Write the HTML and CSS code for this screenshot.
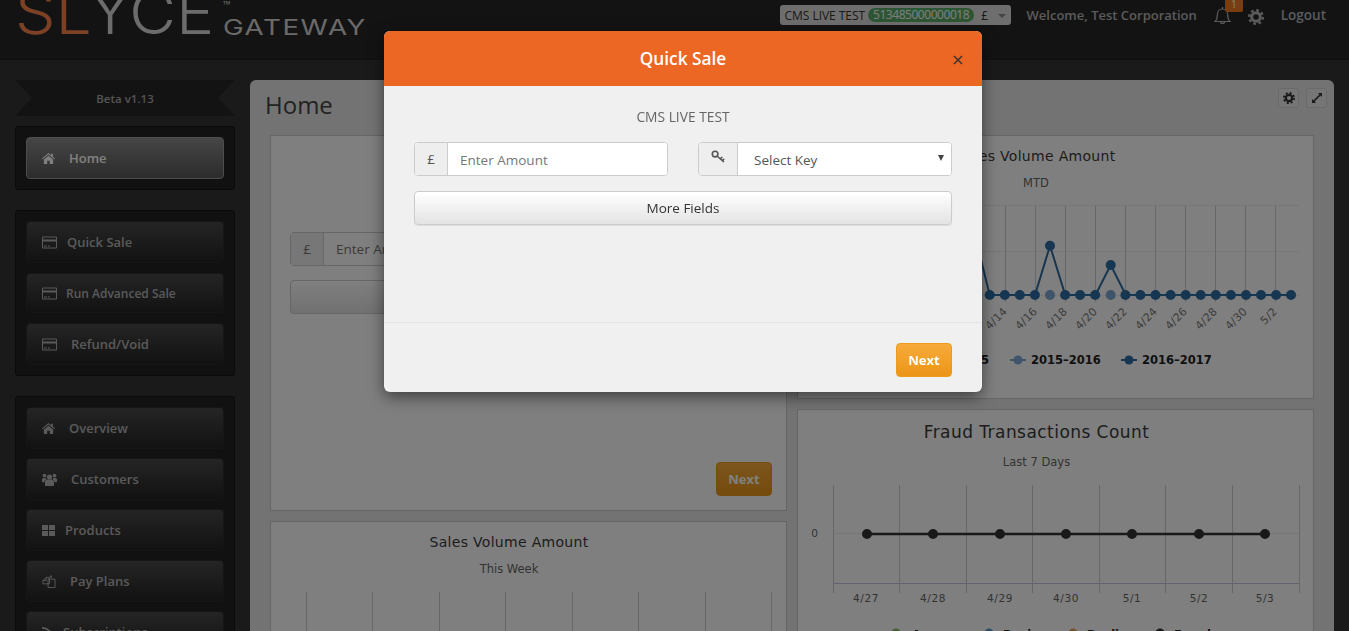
FILE: index.html
```html
<!DOCTYPE html>
<html lang="en">
<head>
<meta charset="utf-8">
<title>Slyce Gateway</title>
<link rel="stylesheet" href="styles.css">
</head>
<body>
<svg class="defs" width="0" height="0" aria-hidden="true">
  <symbol id="i-home" viewBox="0 0 14 12"><path d="M7 0 0 6l.7.9L7 1.6l6.3 5.3.7-.9-2.2-1.9V1h-2v1.6zM2 7.2V12h3.6V8.4h2.8V12H12V7.2L7 3z"/></symbol>
  <symbol id="i-card" viewBox="0 0 15 12"><path fill-rule="evenodd" d="M1 0h13a1 1 0 0 1 1 1v10a1 1 0 0 1-1 1H1a1 1 0 0 1-1-1V1a1 1 0 0 1 1-1zm0 1v2h13V1zm0 4v6h13V5zm1 4h3v1H2zm4 0h2v1H6z"/></symbol>
  <symbol id="i-users" viewBox="0 0 15 13"><circle cx="7.5" cy="4" r="2.6"/><circle cx="2.5" cy="2.6" r="1.9"/><circle cx="12.5" cy="2.6" r="1.9"/><path d="M3 13V9a2.5 2.5 0 0 1 2.5-2.500h4A2.500 2.500 0 0 1 12 9v4zM0 9V6.500A1.500 1.500 0 0 1 1.500 5h2.200a3 3 0 0 0 .8 1.500A3.300 3.300 0 0 0 2.200 9.500zM15 9V6.500A1.500 1.500 0 0 0 13.500 5h-2.200a3 3 0 0 1-.8 1.500 3.300 3.300 0 0 1 2.300 3z"/></symbol>
  <symbol id="i-grid" viewBox="0 0 13 11"><path d="M0 0h6v5H0zM7 0h6v5H7zM0 6h6v5H0zM7 6h6v5H7z"/></symbol>
  <symbol id="i-copy" viewBox="0 0 14 14"><path fill="none" stroke="currentColor" d="M.5 6 4 2.500h3.500v7h-7zM4 2.500V6H.5M7 4 9.500.5v3M6 4.500 8.500 4.500H13.500v9h-7.500z"/></symbol>
  <symbol id="i-rss" viewBox="0 0 12 12"><circle cx="2" cy="10" r="1.700"/><path fill="none" stroke="currentColor" stroke-width="1.800" d="M0 5a7 7 0 0 1 7 7M0 1a11 11 0 0 1 11 11"/></symbol>
  <symbol id="i-gear" viewBox="0 0 16 16"><circle cx="8" cy="8" r="4.300" fill="none" stroke="currentColor" stroke-width="3"/><circle cx="8" cy="8" r="6.800" fill="none" stroke="currentColor" stroke-width="2.400" stroke-dasharray="2.700 2.640"/></symbol>
</svg>

<header class="topbar">
  <div class="logo">
    <span class="logo-mark"><span class="logo-o">SL</span><span class="logo-g">YCE</span></span>
    <span class="logo-tm">™</span>
    <span class="logo-word">GATEWAY</span>
  </div>
  <div class="top-right">
    <div class="merchant">
      <span class="merchant-name">CMS LIVE TEST</span>
      <span class="merchant-id">513485000000018</span>
      <span class="merchant-cur">£</span>
      <span class="caret"></span>
    </div>
    <span class="welcome">Welcome, Test Corporation</span>
    <span class="bell">
      <svg class="bell-ico" viewBox="0 0 17 19" width="17" height="19"><path fill="none" stroke="currentColor" stroke-width="1.200" d="M1 15.500c1.800-1.500 2.300-3.500 2.300-6.500 0-3.500 2.200-6 5.200-6s5.200 2.500 5.200 6c0 3 .5 5 2.300 6.500zM8.500 1v2M6.500 15.500a2 2 0 0 0 4 0"/></svg>
      <span class="bell-badge">1</span>
    </span>
    <svg class="top-gear" width="16" height="16"><use href="#i-gear"/></svg>
    <span class="logout">Logout</span>
  </div>
</header>

<div class="layout">
  <aside class="sidebar">
    <div class="ribbon">Beta v1.13</div>
    <nav class="nav-group">
      <a class="nav-btn active"><svg class="ni ni-13"><use href="#i-home"/></svg><span class="gap-14">Home</span></a>
    </nav>
    <nav class="nav-group nav-spaced">
      <a class="nav-btn"><svg class="ni ni-15"><use href="#i-card"/></svg><span class="gap-10">Quick Sale</span></a>
      <a class="nav-btn short small"><svg class="ni ni-15"><use href="#i-card"/></svg><span class="gap-9">Run Advanced Sale</span></a>
      <a class="nav-btn"><svg class="ni ni-15"><use href="#i-card"/></svg><span class="gap-14">Refund/Void</span></a>
    </nav>
    <nav class="nav-group nav-tight">
      <a class="nav-btn"><svg class="ni ni-13"><use href="#i-home"/></svg><span class="gap-14">Overview</span></a>
      <a class="nav-btn"><svg class="ni ni-15"><use href="#i-users"/></svg><span class="gap-14">Customers</span></a>
      <a class="nav-btn"><svg class="ni ni-13"><use href="#i-grid"/></svg><span class="gap-10">Products</span></a>
      <a class="nav-btn"><svg class="ni ni-14"><use href="#i-copy"/></svg><span class="gap-14">Pay Plans</span></a>
      <a class="nav-btn"><svg class="ni ni-11"><use href="#i-rss"/></svg><span class="gap-10">Subscriptions</span></a>
    </nav>
  </aside>

  <main class="panel">
    <div class="panel-head">
      <h1>Home</h1>
      <div class="tools">
        <button class="tool"><svg width="12" height="12"><use href="#i-gear"/></svg></button>
        <button class="tool"><svg width="12" height="12" viewBox="0 0 12 12"><path d="M7 1h4v4L9.600 3.600 3.600 9.600 5 11H1V7l1.400 1.400 6-6z"/></svg></button>
      </div>
    </div>
    <div class="columns">
      <div class="col">
        <section class="card card-form">
          <div class="bg-form">
            <div class="bg-inputs">
              <div class="bg-group"><span class="bg-addon">£</span><span class="bg-field">Enter Amount</span></div>
              <div class="bg-group"><span class="bg-addon">£</span><span class="bg-field">Select Key</span></div>
            </div>
            <div class="bg-more">More Fields</div>
          </div>
          <div class="bg-foot"><span class="btn-next">Next</span></div>
        </section>
        <section class="card card-week">
          <svg class="chart" viewBox="270 521 517 110" width="517" height="110">
            <text class="c-title" x="509" y="547" text-anchor="middle">Sales Volume Amount</text>
            <text class="c-sub" x="509" y="573" text-anchor="middle">This Week</text>
            <path class="c-grid" d="M306.500 592V631M372.500 592V631M439.500 592V631M505.500 592V631M572.500 592V631M638.500 592V631M705.500 592V631M771.500 592V631"/>
          </svg>
        </section>
      </div>
      <div class="col">
        <section class="card card-mtd">
          <svg class="chart" viewBox="797 135 517 264" width="517" height="264">
            <text class="c-title" x="1036" y="161" text-anchor="middle">Sales Volume Amount</text>
            <text class="c-sub" x="1036" y="187" text-anchor="middle">MTD</text>
            <path class="c-hline" d="M960 205.500H1299M960 251.500H1299M960 295.500H1299"/>
            <path class="c-grid" d="M1005.500 206V302M1035.500 206V302M1065.500 206V302M1095.500 206V302M1125.500 206V302M1155.500 206V302M1185.500 206V302M1215.500 206V302M1245.500 206V302M1275.500 206V302"/>
            <path class="c-light" d="M1050 295h.01M1110.700 295h.01"/>
            <path class="c-line" d="M974.600 234 989.700 295H1035L1050 245.700 1065.200 295H1095.500L1110.700 265 1125.800 295H1291"/>
            <path class="c-dots" d="M989.700 295h.01M1004.800 295h.01M1019.800 295h.01M1034.900 295h.01M1050 245.700h.01M1065.100 295h.01M1080.100 295h.01M1095.200 295h.01M1110.700 265h.01M1125.400 295h.01M1140.400 295h.01M1155.500 295h.01M1170.600 295h.01M1185.700 295h.01M1200.700 295h.01M1215.800 295h.01M1230.900 295h.01M1246 295h.01M1261 295h.01M1276.100 295h.01M1291 295h.01"/>
            <g class="c-tick">
              <text transform="translate(1008 312) rotate(-45)" text-anchor="end">4/14</text>
              <text transform="translate(1038 312) rotate(-45)" text-anchor="end">4/16</text>
              <text transform="translate(1068 312) rotate(-45)" text-anchor="end">4/18</text>
              <text transform="translate(1098 312) rotate(-45)" text-anchor="end">4/20</text>
              <text transform="translate(1128 312) rotate(-45)" text-anchor="end">4/22</text>
              <text transform="translate(1158 312) rotate(-45)" text-anchor="end">4/24</text>
              <text transform="translate(1188 312) rotate(-45)" text-anchor="end">4/26</text>
              <text transform="translate(1218 312) rotate(-45)" text-anchor="end">4/28</text>
              <text transform="translate(1248 312) rotate(-45)" text-anchor="end">4/30</text>
              <text transform="translate(1278 312) rotate(-45)" text-anchor="end">5/2</text>
            </g>
            <g class="c-legend">
              <text x="989" y="364" text-anchor="end">2014–2015</text>
              <path class="lg-light-line" d="M1010 360H1026"/><circle class="lg-light" cx="1018" cy="360" r="4.500"/>
              <text x="1031" y="364">2015–2016</text>
              <path class="lg-dark-line" d="M1121 360H1137"/><circle class="lg-dark" cx="1129" cy="360" r="4.500"/>
              <text x="1142" y="364">2016–2017</text>
            </g>
          </svg>
        </section>
        <section class="card card-fraud">
          <svg class="chart" viewBox="797 409 517 222" width="517" height="222">
            <text class="c-title c-title-lg" x="1036.500" y="438" text-anchor="middle">Fraud Transactions Count</text>
            <text class="c-sub" x="1036.500" y="466" text-anchor="middle">Last 7 Days</text>
            <path class="c-hline" d="M834 533.500H1300"/>
            <path class="c-grid" d="M833.500 485V593M899.500 485V593M966.500 485V593M1032.500 485V593M1099.500 485V593M1165.500 485V593M1232.500 485V593M1299.500 485V593"/>
            <path class="c-axis" d="M833 583.500H1300"/>
            <path class="f-line" d="M867 534H1265"/>
            <path class="f-dots" d="M867 534h.01M933 534h.01M1000 534h.01M1066 534h.01M1132 534h.01M1199 534h.01M1265 534h.01"/>
            <g class="c-label">
              <text x="815" y="537" text-anchor="middle">0</text>
              <text x="866" y="602" text-anchor="middle">4/27</text>
              <text x="933" y="602" text-anchor="middle">4/28</text>
              <text x="1000" y="602" text-anchor="middle">4/29</text>
              <text x="1066" y="602" text-anchor="middle">4/30</text>
              <text x="1132" y="602" text-anchor="middle">5/1</text>
              <text x="1199" y="602" text-anchor="middle">5/2</text>
              <text x="1265" y="602" text-anchor="middle">5/3</text>
            </g>
            <g class="c-legend">
              <circle class="lg-green" cx="896" cy="633" r="4.500"/><text x="912" y="639">Approve</text>
              <circle class="lg-blue" cx="989" cy="633" r="4.500"/><text x="1003" y="639">Review</text>
              <circle class="lg-orange" cx="1073" cy="633" r="4.500"/><text x="1087" y="639">Decline</text>
              <circle class="lg-black" cx="1160" cy="633" r="4.500"/><text x="1174" y="639">Fraud</text>
            </g>
          </svg>
        </section>
      </div>
    </div>
  </main>
</div>

<div class="backdrop"></div>
<div class="modal" role="dialog" aria-label="Quick Sale">
  <div class="modal-head">
    <span class="modal-title">Quick Sale</span>
    <button class="modal-close" aria-label="Close"><svg width="10" height="10" viewBox="0 0 10 10"><path d="M1 1l8 8M9 1l-8 8"/></svg></button>
  </div>
  <div class="modal-body">
    <div class="modal-merchant">CMS LIVE TEST</div>
    <div class="modal-row">
      <div class="group">
        <span class="addon addon-cur">£</span>
        <input class="field" type="text" placeholder="Enter Amount">
      </div>
      <div class="group">
        <span class="addon addon-key"><svg width="14" height="14" viewBox="0 0 13 13"><circle cx="3.800" cy="3.800" r="2.600"/><path d="M5.800 5.800 12 11M8.500 8.200 10.500 6.500M10.500 10 12.200 8.300"/></svg></span>
        <span class="select-wrap"><select class="field field-select"><option>Select Key</option></select></span>
      </div>
    </div>
    <button class="btn-more">More Fields</button>
  </div>
  <div class="modal-foot"><button class="btn-next btn-next-live">Next</button></div>
</div>
</body>
</html>
```

FILE: styles.css
```css
* { box-sizing: border-box; }
html, body { margin: 0; height: 631px; overflow: hidden; }
body { background: #343434; font-family: "Open Sans", "Liberation Sans", sans-serif; font-size: 13px; color: #333; }
.defs { position: absolute; }

/* top bar */
.topbar { height: 60px; background: #262626; border-bottom: 1px solid #202020; display: flex; justify-content: space-between; overflow: hidden; }
.logo { height: 34px; margin-left: 15px; position: relative; width: 360px; }
.logo-mark { position: absolute; left: 0; bottom: 0; font-family: "Inter", sans-serif; font-weight: 300; font-size: 60px; line-height: 44px; display: block; transform: scaleX(1.07); transform-origin: left bottom; white-space: nowrap; }
.logo-o { color: #f8824a; }
.logo-g { color: #d8d8d8; }
.logo-tm { position: absolute; left: 208px; top: -3px; font-size: 10px; letter-spacing: 1px; color: #ccc; }
.logo-word { position: absolute; left: 208px; bottom: -2px; font-family: "Inter", sans-serif; font-size: 21.500px; line-height: 18px; letter-spacing: 1.200px; color: #d4d4d4; transform: scaleX(1.29); transform-origin: left center; }
.top-right { display: flex; align-items: flex-start; padding-right: 23px; color: #b6b6b6; }
.merchant { margin-top: 5px; width: 231px; height: 20px; background: #dcdcdc; border-radius: 3px; display: flex; align-items: center; padding-left: 5px; color: #333; font-size: 12px; position: relative; }
.merchant-name { letter-spacing: -.05px; }
.merchant-id { margin-left: 3px; height: 14px; line-height: 14px; padding: 0 5px; background: #5cab66; color: #fff; border-radius: 8px; letter-spacing: -.45px; }
.merchant-cur { margin-left: 7px; }
.caret { position: absolute; left: 218px; top: 9px; border: 4px solid transparent; border-top-color: #888; border-bottom: 0; }
.welcome { margin-left: 16px; line-height: 30px; font-weight: 600; }
.bell { position: relative; margin-left: 17px; width: 17px; height: 24px; padding-top: 6px; display: block; }
.bell-ico { display: block; color: #b6b6b6; }
.bell-badge { position: absolute; left: 11px; top: -2px; width: 18px; height: 14px; background: #f47a20; border-radius: 2px; color: #fff; font-size: 11px; line-height: 12px; text-align: center; }
.top-gear { margin: 9px 0 0 17px; color: #b6b6b6; fill: none; }
.logout { margin-left: 17px; line-height: 30px; font-weight: 600; font-size: 13.500px; }

/* page */
.layout { display: flex; padding-top: 20px; padding-left: 15px; gap: 15px; }
.sidebar { width: 220px; flex: none; display: flex; flex-direction: column; }
.ribbon { height: 36px; background: #262626; color: #a8a8a8; font-size: 11.500px; font-weight: 600; text-align: center; line-height: 37px; clip-path: polygon(0 0, 100% 0, 203px 50%, 100% 100%, 0 100%, 17px 50%); margin-bottom: 10px; }
.nav-group { background: #222; border: 1px solid #151515; border-radius: 3px; padding: 10px; display: flex; flex-direction: column; gap: 10px; margin-bottom: 20px; }
.nav-tight { gap: 9px; }
.nav-btn { height: 42px; flex: none; display: flex; align-items: center; padding-left: 15px; border: 1px solid #2c2c2c; border-radius: 4px; background: linear-gradient(#4a4a4a, #242424); color: #b4b4b4; fill: #b4b4b4; font-weight: 600; font-size: 13px; }
.nav-btn.short { height: 40px; }
.nav-btn.small { font-size: 12px; }
.nav-btn.active { background: linear-gradient(#8c8c8c, #585858); border-color: #9a9a9a; color: #fff; fill: #fff; }
.ni { height: 13px; flex: none; color: #b4b4b4; }
.ni-11 { width: 11px; } .ni-13 { width: 13px; } .ni-14 { width: 14px; } .ni-15 { width: 15px; }
.gap-9 { margin-left: 9px; } .gap-10 { margin-left: 10px; } .gap-14 { margin-left: 14px; }

.panel { width: 1084px; height: 640px; flex: none; background: #e6e6e6; border-radius: 6px 6px 0 0; padding: 0 20px; }
.panel-head { height: 55px; display: flex; justify-content: space-between; padding-top: 8px; margin-left: -5px; margin-right: -13px; }
.panel-head h1 { margin: 0; font-size: 24px; font-weight: 400; line-height: 34px; color: #444; }
.tools { display: flex; gap: 7px; }
.tool { width: 21px; height: 20px; padding: 0; display: flex; align-items: center; justify-content: center; background: #ececec; border: 1px solid #d4d4d4; border-radius: 3px; color: #333; fill: #333; }
.tool svg { fill: none; color: #333; }
.tool svg path { fill: #333; }
.columns { display: flex; gap: 10px; }
.col { width: 517px; display: flex; flex-direction: column; gap: 10px; }
.card { background: #fff; border: 1px solid #ccc; overflow: hidden; }
.chart { display: block; margin: -1px; overflow: hidden; }
.card-form { height: 376px; padding: 96px 14px 14px 19px; display: flex; flex-direction: column; justify-content: space-between; }
.card-week { height: 120px; }
.card-mtd { height: 264px; }
.card-fraud { height: 230px; }

.bg-inputs { display: flex; gap: 20px; }
.bg-group { flex: 1; height: 34px; display: flex; border: 1px solid #ccc; border-radius: 4px; color: #777; font-size: 13.500px; }
.bg-addon { width: 33px; background: #eee; border-right: 1px solid #ccc; text-align: center; line-height: 32px; }
.bg-field { padding-left: 12px; line-height: 32px; }
.bg-more { margin-top: 14px; height: 34px; border: 1px solid #ccc; border-radius: 4px; background: linear-gradient(#fff, #e2e2e2); text-align: center; line-height: 32px; }
.bg-foot { display: flex; justify-content: flex-end; }

/* chart text */
.c-title { font-family: "DejaVu Sans", sans-serif; font-size: 14px; fill: #3a3a3a; letter-spacing: .3px; }
.c-title-lg { font-size: 17px; letter-spacing: .45px; }
.c-sub { font-family: "DejaVu Sans", sans-serif; font-size: 11.500px; fill: #666; }
.c-hline { stroke: #ececec; fill: none; }
.c-grid { stroke: #cfcfcf; fill: none; }
.c-axis { stroke: #c0c8dc; fill: none; }
.c-tick text { font-family: "DejaVu Sans", sans-serif; font-size: 11px; fill: #7a7a7a; letter-spacing: .3px; }
.c-label text { font-family: "DejaVu Sans", sans-serif; font-size: 10.500px; fill: #666; letter-spacing: .6px; }
.c-legend text { font-family: "DejaVu Sans", sans-serif; font-weight: 700; font-size: 11.500px; fill: #222; }
.c-line { fill: none; stroke: #2d6da4; stroke-width: 2; }
.c-dots { fill: none; stroke: #2d6da4; stroke-width: 10; stroke-linecap: round; }
.c-light { fill: none; stroke: #7fa8d0; stroke-width: 10; stroke-linecap: round; }
.f-line { stroke: #333; stroke-width: 2.500; fill: none; }
.f-dots { fill: none; stroke: #333; stroke-width: 10; stroke-linecap: round; }
.lg-light { fill: #7fa8d0; } .lg-dark { fill: #2d6da4; }
.lg-light-line { stroke: #7fa8d0; stroke-width: 2; } .lg-dark-line { stroke: #2d6da4; stroke-width: 2; }
.lg-green { fill: #7cc35a; } .lg-blue { fill: #5a9bd5; } .lg-orange { fill: #f0a04b; } .lg-black { fill: #333; }

/* modal */
.backdrop { position: fixed; inset: 0; background: rgba(0, 0, 0, .5); }
.modal { position: absolute; left: 384px; top: 31px; width: 598px; height: 361px; background: #f0f0f0; border-radius: 6px; box-shadow: 0 5px 15px rgba(0, 0, 0, .5); overflow: hidden; display: flex; flex-direction: column; font-size: 13.500px; }
.modal-head { height: 55px; flex: none; background: #ec6624; display: flex; align-items: center; justify-content: center; position: relative; }
.modal-title { color: #fff; font-size: 17.300px; font-weight: 600; }
.modal-close { position: absolute; right: 19px; top: 24px; width: 10px; height: 10px; padding: 0; background: none; border: 0; display: block; }
.modal-close svg { display: block; stroke: #333; stroke-width: 1.400; fill: none; }
.modal-body { flex: none; height: 237px; padding: 0 30px; border-bottom: 1px solid #e4e4e4; }
.modal-merchant { text-align: center; line-height: 18px; margin-top: 22px; color: #666; font-size: 13.800px; }
.modal-row { display: flex; justify-content: space-between; margin-top: 16px; }
.group { width: 254px; height: 34px; display: flex; border: 1px solid #ccc; border-radius: 4px; overflow: hidden; background: #fff; }
.addon { flex: none; background: #eee; border-right: 1px solid #ccc; display: flex; align-items: center; justify-content: center; color: #555; }
.addon-cur { width: 33px; }
.addon-key { width: 39px; padding-bottom: 4px; }
.addon-key svg { fill: none; stroke: #555; stroke-width: 1.500; }
.field { flex: 1; min-width: 0; height: 32px; border: 0; padding: 1px 12px 0; font: inherit; color: #555; background: #fff; outline: 0; }
.field::placeholder { color: #777; opacity: 1; }
.select-wrap { flex: 1; min-width: 0; position: relative; display: flex; }
.select-wrap::after { content: ""; position: absolute; right: 7px; top: 12px; border: 3.500px solid transparent; border-top: 6px solid #444; border-bottom: 0; }
.field-select { appearance: none; -webkit-appearance: none; padding-left: 16px; width: 100%; border-radius: 0; }
.btn-more { display: block; width: 100%; height: 34px; margin-top: 15px; padding: 0; border: 1px solid #ccc; border-radius: 4px; background: linear-gradient(#fff, #e3e3e3); font: inherit; color: #333; box-shadow: 0 1px 1px rgba(0, 0, 0, .08); }
.modal-foot { flex: 1; display: flex; justify-content: flex-end; align-items: flex-start; padding: 20px 30px 0; }
.btn-next { width: 56px; height: 34px; padding: 0; border: 1px solid #ec9b1c; border-radius: 4px; background: linear-gradient(#f7ab3a, #ec9518); color: #fff; font: 700 13px "Open Sans", sans-serif; text-align: center; line-height: 32px; display: block; }
```
